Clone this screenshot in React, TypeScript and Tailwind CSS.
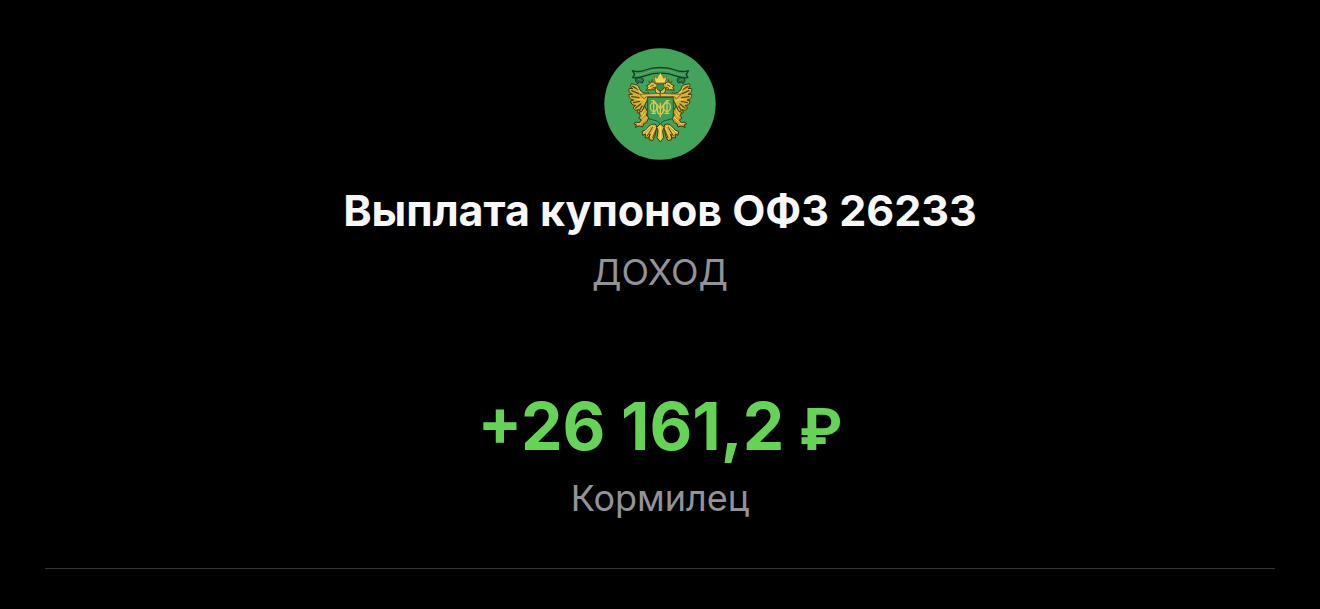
function WingHalf() {
  return (
    <g>
      {/* wing feathers */}
      <path
        d="M146 146 C132 152 120 142 116 128 C112 120 104 122 94 119 C90 124 93 131 98 134 L88 133 C84 140 89 148 98 151 L87 151 C85 160 92 167 101 168 L92 171 C92 180 99 185 107 184 L100 190 C101 199 110 201 115 196 L112 206 C120 210 127 204 129 196 L136 180 L144 164 Z"
        fill="#d9b034"
        stroke="#3a3a12"
        strokeWidth="3"
        strokeLinejoin="round"
      />
      <path d="M98 127 L116 138 M95 140 L116 149 M95 158 L117 161 M100 176 L118 172 M107 192 L122 180 M118 200 L126 186" fill="none" stroke="#4f4a18" strokeWidth="4" strokeLinecap="round" />
      <path d="M112 130 C120 150 134 156 144 154 M112 168 C122 164 128 166 136 172" fill="none" stroke="#f3d65c" strokeWidth="3" />
      {/* head and neck */}
      <path
        d="M176 150 C166 147 163 139 168 130 C162 137 156 139 149 137 L139 139 L144 130 L139 125 L148 121 C152 112 163 112 166 120 C170 115 174 120 173 126 C170 133 170 137 181 141 L181 152 Z"
        fill="#ecc544"
        stroke="#3a3a12"
        strokeWidth="3"
        strokeLinejoin="round"
      />
      <path d="M152 127 L160 123 M156 133 L165 129 M155 113 L157 107 M150 117 L146 111" stroke="#5a4513" strokeWidth="3" strokeLinecap="round" />
      <path d="M119 151 L181 148 L181 158 L140 158 L132 164 Z" fill="#e4bd3d" stroke="#51420f" strokeWidth="2" />
      {/* leg and claw */}
      <path
        d="M133 185 L128 200 L117 205 L121 215 L116 223 L124 228 L118 236 L107 234 L102 240 L110 243 L106 250 L118 246 L128 249 L131 239 L139 236 L147 221 L139 214 L143 203 Z"
        fill="#caa033"
        stroke="#3a3a12"
        strokeWidth="3"
        strokeLinejoin="round"
      />
      <path d="M132 197 L124 211 M136 207 L127 219 M139 220 L126 233 M122 239 L112 240" stroke="#f2d45a" strokeWidth="3" strokeLinecap="round" />
      {/* tail feathers */}
      <path
        d="M168 242 C154 236 146 247 137 258 L126 262 L128 274 L137 270 L135 282 L146 281 L150 270 L147 287 L158 290 L164 278 L170 250 Z"
        fill="#d9ae36"
        stroke="#3a3a12"
        strokeWidth="3"
        strokeLinejoin="round"
      />
      <path d="M163 246 L139 270 M166 251 L151 280 M154 245 L132 265" stroke="#f4d960" strokeWidth="3" strokeLinecap="round" />
      <path d="M158 249 L141 277 M168 257 L158 282" stroke="#584611" strokeWidth="3" />
      {/* ribbon tail */}
      <path d="M108 99 L126 101 L131 108 L127 117 L118 114 L113 119 L107 111 Z" fill="#267445" stroke="#123e2a" strokeWidth="3" />
      <path d="M114 106 L124 109" stroke="#58a869" strokeWidth="2" />
    </g>
  );
}

function Emblem() {
  return (
    <svg viewBox="12 12 336 336" className="size-28" role="img" aria-label="Минфин">
      <circle cx="180" cy="180" r="167" fill="#43a35b" />
      <WingHalf />
      <g transform="translate(362 0) scale(-1 1)">
        <WingHalf />
      </g>
      {/* ribbon */}
      <path
        d="M97 80 C112 84 124 84 136 78 C162 68 200 68 226 78 C238 84 250 84 265 80 L259 92 L264 101 C247 103 235 99 222 94 C198 85 164 85 140 94 C127 99 115 103 98 101 L104 91 Z"
        fill="#3c9955"
        stroke="#123e2a"
        strokeWidth="4"
        strokeLinejoin="round"
      />
      <path d="M108 92 C128 94 138 84 158 80 C174 77 190 77 204 80 C224 84 234 94 254 92" fill="none" stroke="#7db566" strokeWidth="3" strokeDasharray="4 2" />
      {/* crown */}
      <path d="M166 117 L162 96 L171 103 L175 94 L181 90 L187 94 L191 103 L200 96 L196 117 Z" fill="#f0cf51" stroke="#6d5716" strokeWidth="2" strokeLinejoin="round" />
      <path d="M181 88 V96 M168 112 H194" stroke="#f6df73" strokeWidth="3" />
      <path d="M170 121 H192 V130 Q190 137 181 140 Q172 137 170 130 Z" fill="#349252" stroke="#26643a" strokeWidth="2" />
      {/* tail centre */}
      <path d="M181 239 L170 250 L174 261 L171 281 L181 294 L191 281 L188 261 L192 250 Z" fill="#e7bf3e" stroke="#423610" strokeWidth="3" strokeLinejoin="round" />
      <path d="M181 247 V287" stroke="#fae07a" strokeWidth="3" />
      {/* shield */}
      <path d="M143 160 H220 V216 Q219 226 207 227 Q190 228 181 239 Q172 228 156 227 Q144 226 143 216 Z" fill="#3c9f58" stroke="#1d5736" strokeWidth="3" />
      <g fill="none" stroke="#dec94f" strokeWidth="4">
        <path d="M161 170 V208 M201 170 V208 M154 170 H163 M199 170 H208 M154 208 H168 M194 208 H208" />
        <path d="M162 171 L181 194 L200 171 M181 176 V220 M172 188 V200 Q173 210 181 211 Q189 210 190 200 V188" />
        <ellipse cx="161" cy="189" rx="10" ry="13" />
        <ellipse cx="201" cy="189" rx="10" ry="13" />
      </g>
    </svg>
  );
}

export default function App() {
  return (
    <main className="min-h-screen bg-black px-[45px] pt-12 pb-10 text-center font-['Inter',sans-serif]">
      <header className="flex flex-col items-center">
        <Emblem />
        <h1 className="mt-6 text-[43px] leading-[52px] font-bold text-[#f7f7f8]">Выплата купонов ОФЗ 26233</h1>
        <p className="mt-2 text-[36px] leading-[56px] text-[#929297]">ДОХОД</p>
      </header>
      <section className="mt-22 flex flex-col items-center">
        <p className="text-[66px] leading-[76px] font-bold text-[#65d456]">
          +26 161,2 <span className="font-['Roboto',sans-serif] text-[60px] leading-none">₽</span>
        </p>
        <p className="mt-2 text-[36px] leading-[52px] text-[#929297]">Кормилец</p>
      </section>
      <hr className="mt-11 border-t border-[#353535]" />
    </main>
  );
}
